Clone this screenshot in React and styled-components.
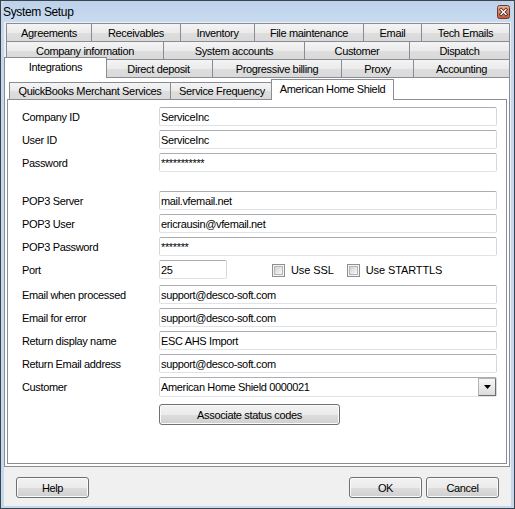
import React from 'react';
import styled, { createGlobalStyle } from 'styled-components';

const GlobalStyle = createGlobalStyle`
  html, body {
    margin: 0;
    padding: 0;
    background: #ffffff;
  }
  body {
    font-family: "Liberation Sans", Arial, sans-serif;
    font-size: 11px;
    letter-spacing: -0.35px;
    color: #000;
  }
`;

const TAB_ROWS = [
  [
    ['Agreements', 86],
    ['Receivables', 90],
    ['Inventory', 75],
    ['File maintenance', 110],
    ['Email', 59],
    ['Tech Emails', 89],
  ],
  [
    ['Company information', 158],
    ['System accounts', 142],
    ['Customer', 106],
    ['Dispatch', 101],
  ],
  [
    ['Integrations', 99, true],
    ['Direct deposit', 109],
    ['Progressive billing', 130],
    ['Proxy', 73],
    ['Accounting', 97],
  ],
];

const SUB_TABS = [
  ['QuickBooks Merchant Services', 162],
  ['Service Frequency', 104],
  ['American Home Shield', 119, true],
];

const FIELDS = [
  { label: 'Company ID', value: 'ServiceInc' },
  { label: 'User ID', value: 'ServiceInc' },
  { label: 'Password', value: '***********' },
  { label: 'POP3 Server', value: 'mail.vfemail.net', gap: 19 },
  { label: 'POP3 User', value: 'ericrausin@vfemail.net' },
  { label: 'POP3 Password', value: '*******' },
];

const EMAIL_FIELDS = [
  { label: 'Email when processed', value: 'support@desco-soft.com', gap: 5 },
  { label: 'Email for error', value: 'support@desco-soft.com' },
  { label: 'Return display name', value: 'ESC AHS Import' },
  { label: 'Return Email address', value: 'support@desco-soft.com' },
];

function CloseIcon() {
  return (
    <svg width="13" height="14" viewBox="0 0 13 14">
      <defs>
        <linearGradient id="closeFill" x1="0" y1="0" x2="0" y2="1">
          <stop offset="0" stopColor="#e8b3a4" />
          <stop offset="0.5" stopColor="#d58468" />
          <stop offset="1" stopColor="#c2563a" />
        </linearGradient>
      </defs>
      <rect x="0.5" y="0.5" width="12" height="13" rx="2" fill="url(#closeFill)" stroke="#6f3a2c" />
      <path d="M4 4.5 L9 9.5 M9 4.5 L4 9.5" stroke="#4a2419" strokeWidth="3" strokeLinecap="square" />
      <path d="M4 4.5 L9 9.5 M9 4.5 L4 9.5" stroke="#ffffff" strokeWidth="1.4" strokeLinecap="square" />
    </svg>
  );
}

function Tab({ label, width, active, first, sub }) {
  return (
    <StyledTab $width={width} $active={active} $first={first} $sub={sub}>
      {label}
    </StyledTab>
  );
}

function Field({ label, value, gap }) {
  return (
    <StyledRow $gap={gap}>
      <StyledLabel>{label}</StyledLabel>
      <StyledInput type="text" value={value} readOnly />
    </StyledRow>
  );
}

function Checkbox({ label }) {
  return (
    <StyledCheckLabel>
      <StyledCheckBox />
      {label}
    </StyledCheckLabel>
  );
}

export default function App() {
  return (
    <>
      <GlobalStyle />
      <StyledWindow>
        <StyledTitleBar>
          <StyledTitle>System Setup</StyledTitle>
          <StyledClose>
            <CloseIcon />
          </StyledClose>
        </StyledTitleBar>
        <StyledClient>
          {TAB_ROWS.map((row, i) => (
            <StyledTabRow key={i}>
              {row.map(([label, width, active], j) => (
                <Tab key={label} label={label} width={width} active={active} first={j === 0} />
              ))}
            </StyledTabRow>
          ))}
          <StyledPanel>
            <StyledSubTabRow>
              {SUB_TABS.map(([label, width, active], j) => (
                <Tab key={label} label={label} width={width} active={active} first={j === 0} sub />
              ))}
            </StyledSubTabRow>
            <StyledSubPanel>
              {FIELDS.map((f) => (
                <Field key={f.label} {...f} />
              ))}
              <StyledRow $height={20}>
                <StyledLabel>Port</StyledLabel>
                <StyledInput type="text" value="25" readOnly $width={68} />
                <StyledChecks>
                  <Checkbox label="Use SSL" />
                  <Checkbox label="Use STARTTLS" />
                </StyledChecks>
              </StyledRow>
              {EMAIL_FIELDS.map((f) => (
                <Field key={f.label} {...f} />
              ))}
              <StyledRow $height={20}>
                <StyledLabel>Customer</StyledLabel>
                <StyledCombo>
                  <StyledComboText>American Home Shield 0000021</StyledComboText>
                  <StyledComboButton>
                    <svg width="7" height="4" viewBox="0 0 7 4">
                      <polygon points="0,0 7,0 3.5,4" fill="#000" />
                    </svg>
                  </StyledComboButton>
                </StyledCombo>
              </StyledRow>
              <StyledRow $gap={7} $height={21}>
                <StyledLabel />
                <StyledButton $width={181}>Associate status codes</StyledButton>
              </StyledRow>
            </StyledSubPanel>
          </StyledPanel>
          <StyledFooter>
            <StyledButton $width={73}>Help</StyledButton>
            <StyledButtonGroup>
              <StyledButton $width={73}>OK</StyledButton>
              <StyledButton $width={73}>Cancel</StyledButton>
            </StyledButtonGroup>
          </StyledFooter>
        </StyledClient>
      </StyledWindow>
    </>
  );
}

const StyledWindow = styled.div`
  box-sizing: border-box;
  width: 515px;
  height: 509px;
  border: 1px solid #3c434b;
  background: #c4d8ee;
  display: flex;
  flex-direction: column;
  padding: 0 3px 2px;
`;

const StyledTitleBar = styled.div`
  height: 21px;
  flex: none;
  display: flex;
  align-items: center;
  justify-content: space-between;
  background: linear-gradient(#bcd2ea, #c8dbf0);
`;

const StyledTitle = styled.span`
  font-size: 12px;
  letter-spacing: -0.35px;
  margin-left: -1px;
`;

const StyledClose = styled.div`
  display: flex;
  margin-right: 1px;
`;

const StyledClient = styled.div`
  flex: 1;
  display: flex;
  flex-direction: column;
  background: #f0f0f0;
  padding-top: 1px;
  min-height: 0;
`;

const StyledTabRow = styled.div`
  display: flex;
  align-items: flex-start;
  height: 18px;
  margin-left: 2px;
  flex: none;
`;

const StyledSubTabRow = styled(StyledTabRow)`
  height: 17px;
`;

const StyledTab = styled.div`
  flex: none;
  box-sizing: border-box;
  display: flex;
  align-items: center;
  justify-content: center;
  white-space: nowrap;
  position: relative;
  width: ${({ $width, $active }) => ($active ? $width + 4 : $width)}px;
  height: ${({ $active, $sub }) => ($active ? 21 : $sub ? 17 : 18)}px;
  margin-top: ${({ $active, $sub }) => ($active ? ($sub ? -3 : -2) : 0)}px;
  margin-left: ${({ $active, $first }) => ($first ? 0 : -1) - ($active ? 2 : 0)}px;
  margin-right: ${({ $active }) => ($active ? -2 : 0)}px;
  z-index: ${({ $active }) => ($active ? 2 : 1)};
  border: 1px solid #898c95;
  border-bottom: none;
  background: ${({ $active }) =>
    $active ? '#ffffff' : 'linear-gradient(#f4f4f4 0%, #ebebeb 50%, #dedede 51%, #d9d9d9 100%)'};
  padding-bottom: ${({ $active }) => ($active ? 2 : 0)}px;
`;

const StyledPanel = styled.div`
  flex: 1;
  min-height: 0;
  display: flex;
  flex-direction: column;
  background: #ffffff;
  border: 1px solid #898c95;
  margin-right: 1px;
  padding: 4px 2px 2px;
`;

const StyledSubPanel = styled.div`
  flex: 1;
  background: #ffffff;
  border: 1px solid #898c95;
  padding: 7px 9px 0 14px;
`;

const StyledRow = styled.div`
  display: flex;
  align-items: center;
  height: ${({ $height }) => $height || 19}px;
  margin-top: ${({ $gap }) => ($gap === undefined ? 4 : $gap)}px;
  &:first-child {
    margin-top: 0;
  }
`;

const StyledLabel = styled.span`
  flex: none;
  width: 137px;
  white-space: nowrap;
`;

const StyledInput = styled.input`
  box-sizing: border-box;
  height: 19px;
  width: ${({ $width }) => ($width ? `${$width}px` : 'auto')};
  flex: ${({ $width }) => ($width ? 'none' : '1')};
  align-self: flex-start;
  margin: 0;
  padding: 0 2px 0 1px;
  border: 1px solid;
  border-color: #abadb3 #d5d8de #dfe3e8 #d5d8de;
  border-radius: 2px;
  background: #ffffff;
  font: inherit;
  letter-spacing: inherit;
  color: #000;
  outline: none;
`;

const StyledChecks = styled.div`
  display: flex;
  align-items: center;
  gap: 13px;
  margin-left: 45px;
`;

const StyledCheckLabel = styled.label`
  display: flex;
  align-items: center;
  gap: 6px;
  white-space: nowrap;
  letter-spacing: -0.1px;
`;

const StyledCheckBox = styled.span`
  box-sizing: border-box;
  width: 13px;
  height: 13px;
  border: 1px solid #8e8f8f;
  background: #f4f4f4;
  position: relative;
  &::after {
    content: '';
    position: absolute;
    left: 1px;
    top: 1px;
    width: 9px;
    height: 9px;
    box-sizing: border-box;
    border: 1px solid #b3b6ba;
    background: linear-gradient(135deg, #d2d2d2, #f8f8f8);
  }
`;

const StyledCombo = styled.div`
  box-sizing: border-box;
  flex: 1;
  height: 20px;
  display: flex;
  align-items: center;
  border: 1px solid;
  border-color: #abadb3 #d5d8de #dfe3e8 #d5d8de;
  border-radius: 2px;
  background: #ffffff;
`;

const StyledComboText = styled.span`
  flex: 1;
  padding-left: 1px;
  white-space: nowrap;
`;

const StyledComboButton = styled.span`
  box-sizing: border-box;
  width: 18px;
  height: 18px;
  display: flex;
  align-items: center;
  justify-content: center;
  border: 1px solid;
  border-color: #b4b4b4 #6e6e6e #6e6e6e #b4b4b4;
  background: linear-gradient(#f7f7f7, #dcdcdc);
`;

const StyledButton = styled.div`
  box-sizing: border-box;
  width: ${({ $width }) => $width}px;
  height: 21px;
  display: flex;
  align-items: center;
  justify-content: center;
  border: 1px solid #707070;
  border-radius: 3px;
  background: linear-gradient(#f2f2f2 0%, #ebebeb 50%, #dddddd 51%, #cfcfcf 100%);
  box-shadow: inset 0 0 0 1px #fbfbfb;
  white-space: nowrap;
`;

const StyledFooter = styled.div`
  flex: none;
  display: flex;
  justify-content: space-between;
  padding: 10px 12px 8px;
`;

const StyledButtonGroup = styled.div`
  display: flex;
  gap: 4px;
`;
